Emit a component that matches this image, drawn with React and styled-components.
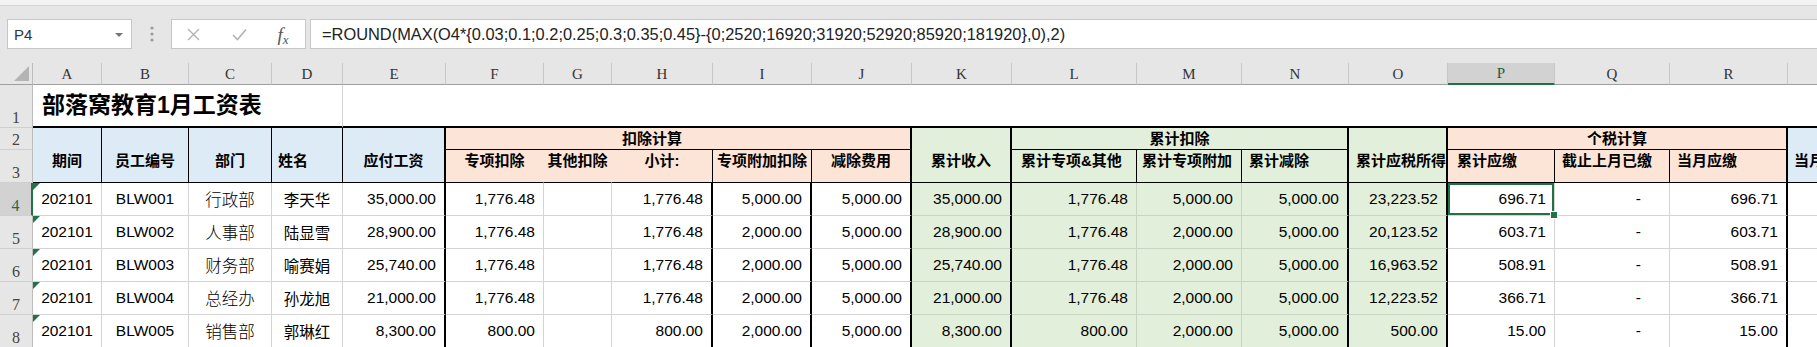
import React from 'react';
import styled, { createGlobalStyle } from 'styled-components';

const GlobalStyle = createGlobalStyle`
  html, body {
    margin: 0;
    padding: 0;
    background: #fff;
  }
  body {
    font-family: "Liberation Sans", "Noto Sans CJK SC", sans-serif;
    overflow: hidden;
  }
`;

// column widths: row header, A..S
const COLS = [33, 69, 87, 83, 71, 103, 98, 68, 101, 99, 100, 100, 125, 105, 107, 99, 107, 115, 118, 100];
// column header, rows 1..8
const ROWS = [22, 43, 22, 33, 33, 33, 33, 33, 33];
const LETTERS = 'ABCDEFGHIJKLMNOPQRS'.split('');

const BLUE = '#ddebf7';
const PEACH = '#fce4d6';
const GREEN = '#e2efda';
const XL_GREEN = '#217346';

const GRID = '1px solid #d4d4d4';
const GRID_G = '1px solid #c8d4c1';
const THIN = '1px solid #000';
const THICK = '2px solid #000';

const FORMULA = '=ROUND(MAX(O4*{0.03;0.1;0.2;0.25;0.3;0.35;0.45}-{0;2520;16920;31920;52920;85920;181920},0),2)';

const people = [
  { id: 'BLW001', dept: '行政部', name: '李天华', pay: '35,000.00', spec: '1,776.48', add: '5,000.00', taxable: '23,223.52', due: '696.71' },
  { id: 'BLW002', dept: '人事部', name: '陆显雪', pay: '28,900.00', spec: '1,776.48', add: '2,000.00', taxable: '20,123.52', due: '603.71' },
  { id: 'BLW003', dept: '财务部', name: '喻赛娟', pay: '25,740.00', spec: '1,776.48', add: '2,000.00', taxable: '16,963.52', due: '508.91' },
  { id: 'BLW004', dept: '总经办', name: '孙龙旭', pay: '21,000.00', spec: '1,776.48', add: '2,000.00', taxable: '12,223.52', due: '366.71' },
  { id: 'BLW005', dept: '销售部', name: '郭琳红', pay: '8,300.00', spec: '800.00', add: '2,000.00', taxable: '500.00', due: '15.00' },
];

// how each data column looks, A..S
const dataCols = [
  { get: () => '202101', align: 'center', flag: true },
  { get: p => p.id, align: 'center' },
  { get: p => p.dept, align: 'center', light: true },
  { get: p => p.name, align: 'center' },
  { get: p => p.pay, r: THICK },
  { get: p => p.spec },
  { get: () => '' },
  { get: p => p.spec, r: THICK },
  { get: p => p.add, r: THICK },
  { get: () => '5,000.00', r: THICK },
  { get: p => p.pay, bg: GREEN, r: THICK, b: GRID_G },
  { get: p => p.spec, bg: GREEN, r: GRID_G, b: GRID_G },
  { get: p => p.add, bg: GREEN, r: GRID_G, b: GRID_G },
  { get: () => '5,000.00', bg: GREEN, r: THICK, b: GRID_G },
  { get: p => p.taxable, bg: GREEN, r: THICK, b: GRID_G },
  { get: p => p.due, sel: true },
  { get: () => '-', pad: 28 },
  { get: p => p.due, r: THICK },
  { get: () => '' },
];

// header cells of sheet rows 2-3 (grid rows 3-4); col/row are grid lines
const headers = [
  { text: '期间', col: '2', row: '3 / 5', bg: BLUE, align: 'center', r: THIN },
  { text: '员工编号', col: '3', row: '3 / 5', bg: BLUE, align: 'center', r: THIN },
  { text: '部门', col: '4', row: '3 / 5', bg: BLUE, align: 'center', r: THIN },
  { text: '姓名', col: '5', row: '3 / 5', bg: BLUE, align: 'left', pad: 6, r: THIN },
  { text: '应付工资', col: '6', row: '3 / 5', bg: BLUE, align: 'center', r: THICK },

  { text: '扣除计算', col: '7 / 12', row: '3', top: true, bg: PEACH, align: 'left', pad: 176, r: THICK },
  { text: '专项扣除', col: '7', row: '4', bg: PEACH, align: 'center', pad: 0, r: `1px solid ${PEACH}` },
  { text: '其他扣除', col: '8', row: '4', bg: PEACH, align: 'center', pad: 0, r: `1px solid ${PEACH}` },
  { text: '小计:', col: '9', row: '4', bg: PEACH, align: 'center', pad: 0, r: THIN },
  { text: '专项附加扣除', col: '10', row: '4', bg: PEACH, align: 'center', pad: 0, r: THIN },
  { text: '减除费用', col: '11', row: '4', bg: PEACH, align: 'center', pad: 0, r: THICK },

  { text: '累计收入', col: '12', row: '3 / 5', bg: GREEN, align: 'center', r: THICK },

  { text: '累计扣除', col: '13 / 16', row: '3', top: true, bg: GREEN, align: 'center', r: THICK },
  { text: '累计专项&其他', col: '13', row: '4', bg: GREEN, align: 'left', pad: 9, r: THIN },
  { text: '累计专项附加', col: '14', row: '4', bg: GREEN, align: 'left', pad: 5, r: THIN },
  { text: '累计减除', col: '15', row: '4', bg: GREEN, align: 'left', pad: 7, r: THICK },

  { text: '累计应税所得', col: '16', row: '3 / 5', bg: GREEN, align: 'left', pad: 7, r: THICK },

  { text: '个税计算', col: '17 / 20', row: '3', top: true, bg: PEACH, align: 'center', r: THICK },
  { text: '累计应缴', col: '17', row: '4', bg: PEACH, align: 'left', pad: 9, r: THIN },
  { text: '截止上月已缴', col: '18', row: '4', bg: PEACH, align: 'left', pad: 7, r: THIN },
  { text: '当月应缴', col: '19', row: '4', bg: PEACH, align: 'left', pad: 7, r: THICK },

  { text: '当月实发', col: '20', row: '3 / 5', bg: BLUE, align: 'left', pad: 6, r: GRID },
];

const justify = { left: 'flex-start', center: 'center', right: 'flex-end' };

/* ---------- formula bar ---------- */

const TopStrip = styled.div`
  height: 5px;
  background: #f3f3f3;
  border-bottom: 1px solid #d6d6d6;
`;

const Toolbar = styled.div`
  height: 57px;
  box-sizing: border-box;
  background: #e6e6e6;
  display: flex;
  align-items: flex-start;
  padding: 13px 0 0 7px;
`;

const NameBox = styled.div`
  position: relative;
  width: 125px;
  height: 30px;
  box-sizing: border-box;
  background: #fff;
  border: 1px solid #c6c6c6;
  display: flex;
  align-items: center;
  padding-left: 6px;
  font-size: 15px;
  color: #333;
`;

const Caret = styled.span`
  position: absolute;
  right: 8px;
  top: 13px;
  border-left: 4px solid transparent;
  border-right: 4px solid transparent;
  border-top: 4px solid #777;
`;

const Grip = styled.div`
  width: 39px;
  height: 30px;
  display: flex;
  align-items: center;
  justify-content: center;
`;

const ButtonBox = styled.div`
  width: 135px;
  height: 30px;
  box-sizing: border-box;
  background: #fff;
  border: 1px solid #c6c6c6;
  display: grid;
  grid-template-columns: 42px 50px 38px;
  align-items: center;
  justify-items: center;
`;

const Fx = styled.span`
  font-family: "Liberation Serif", serif;
  font-style: italic;
  font-size: 19px;
  color: #555;
  line-height: 1;
  & small {
    font-size: 13px;
    position: relative;
    top: 3px;
  }
`;

const FormulaBox = styled.div`
  flex: 1;
  margin-left: 4px;
  height: 30px;
  box-sizing: border-box;
  background: #fff;
  border: 1px solid #c6c6c6;
  border-right: none;
  display: flex;
  align-items: center;
  padding-left: 11px;
  font-size: 16.4px;
  color: #222;
  white-space: nowrap;
  overflow: hidden;
`;

/* ---------- sheet ---------- */

const Sheet = styled.div`
  display: grid;
  grid-template-columns: ${COLS.map(c => c + 'px').join(' ')};
  grid-template-rows: ${ROWS.map(r => r + 'px').join(' ')};
  width: max-content;
`;

const Corner = styled.div`
  grid-column: 1;
  grid-row: 1;
  position: relative;
  background: #e6e6e6;
  border-right: 1px solid #bdbdbd;
  border-bottom: 1px solid #9f9f9f;
  &::after {
    content: '';
    position: absolute;
    right: 3px;
    bottom: 3px;
    border-left: 15px solid transparent;
    border-bottom: 15px solid #b4b4b4;
  }
`;

const ColHead = styled.div`
  grid-row: 1;
  grid-column: ${p => p.$col};
  display: flex;
  align-items: center;
  justify-content: center;
  background: ${p => (p.$active ? '#d2d2d2' : '#e6e6e6')};
  border-right: 1px solid #c8c8c8;
  border-bottom: ${p => (p.$active ? `2px solid ${XL_GREEN}` : '1px solid #9f9f9f')};
  font-family: "Liberation Serif", serif;
  font-size: 15px;
  color: ${p => (p.$active ? '#1f5c3a' : '#333')};
  padding-top: 1px;
`;

const RowHead = styled.div`
  grid-column: 1;
  grid-row: ${p => p.$row};
  display: flex;
  align-items: flex-end;
  justify-content: center;
  background: ${p => (p.$active ? '#d2d2d2' : '#e6e6e6')};
  border-right: ${p => (p.$active ? `2px solid ${XL_GREEN}` : '1px solid #bdbdbd')};
  border-bottom: 1px solid #cfcfcf;
  font-family: "Liberation Serif", serif;
  font-size: 16px;
  line-height: 18px;
  color: ${p => (p.$active ? '#2b6a45' : '#444')};
`;

const Cell = styled.div`
  grid-column: ${p => p.$col};
  grid-row: ${p => p.$row};
  position: relative;
  display: flex;
  align-items: center;
  justify-content: ${p => justify[p.$align || 'right']};
  padding: 0 ${p => p.$pad ?? 8}px;
  background: ${p => p.$bg || '#fff'};
  border-right: ${p => p.$r || GRID};
  border-bottom: ${p => p.$b || GRID};
  box-shadow: ${p => (p.$sel ? `inset 0 0 0 2px ${XL_GREEN}` : 'none')};
  white-space: nowrap;
  overflow: ${p => (p.$sel ? 'visible' : 'hidden')};
  font-size: ${p => (p.$light ? 16.5 : 15.5)}px;
  font-weight: ${p => (p.$light ? 300 : 400)};
  color: #000;
`;

const Flag = styled.span`
  position: absolute;
  top: 0;
  left: 0;
  border-top: 7px solid ${XL_GREEN};
  border-right: 7px solid transparent;
`;

const Handle = styled.span`
  position: absolute;
  right: -4px;
  bottom: -4px;
  width: 6px;
  height: 6px;
  background: ${XL_GREEN};
  border: 1px solid #fff;
  z-index: 2;
`;

const TitleCell = styled(Cell)`
  align-items: flex-end;
  padding: 0 0 7px 9px;
  font-size: 23px;
  font-weight: 700;
  line-height: 28px;
`;

const HeadCell = styled(Cell)`
  align-items: ${p => (p.$top ? 'center' : 'flex-end')};
  padding-bottom: ${p => (p.$top ? 0 : 11)}px;
  font-size: 15px;
  font-weight: 700;
  line-height: 20px;
  border-bottom: ${THIN};
`;

function Cross() {
  return (
    <svg width="15" height="15" viewBox="0 0 15 15">
      <path d="M2 2 L13 13 M13 2 L2 13" stroke="#b3b3b3" strokeWidth="1.4" fill="none" />
    </svg>
  );
}

function Check() {
  return (
    <svg width="17" height="15" viewBox="0 0 17 15">
      <path d="M2 8 L6.5 12.5 L15 2.5" stroke="#b3b3b3" strokeWidth="1.6" fill="none" />
    </svg>
  );
}

function Dots() {
  return (
    <svg width="4" height="16" viewBox="0 0 4 16">
      <circle cx="2" cy="2" r="1.6" fill="#9c9c9c" />
      <circle cx="2" cy="8" r="1.6" fill="#9c9c9c" />
      <circle cx="2" cy="14" r="1.6" fill="#9c9c9c" />
    </svg>
  );
}

export default function App() {
  return (
    <>
      <GlobalStyle />
      <TopStrip />
      <Toolbar>
        <NameBox>
          P4
          <Caret />
        </NameBox>
        <Grip>
          <Dots />
        </Grip>
        <ButtonBox>
          <Cross />
          <Check />
          <Fx>
            f<small>x</small>
          </Fx>
        </ButtonBox>
        <FormulaBox>{FORMULA}</FormulaBox>
      </Toolbar>

      <Sheet>
        <Corner />
        {LETTERS.map((l, i) => (
          <ColHead key={l} $col={i + 2} $active={l === 'P'}>
            {l}
          </ColHead>
        ))}
        {[1, 2, 3, 4, 5, 6, 7, 8].map(n => (
          <RowHead key={n} $row={n + 1} $active={n === 4}>
            {n}
          </RowHead>
        ))}

        {/* row 1: title */}
        <TitleCell $col="2 / 6" $row="2" $align="left" $b={THICK}>
          部落窝教育1月工资表
        </TitleCell>
        <Cell $col="6 / 21" $row="2" $r="none" $b={THICK} />

        {headers.map(h => (
          <HeadCell
            key={h.text}
            $col={h.col}
            $row={h.row}
            $top={h.top}
            $bg={h.bg}
            $align={h.align}
            $pad={h.pad}
            $r={h.r}
          >
            {h.text}
          </HeadCell>
        ))}

        {people.map((p, ri) =>
          dataCols.map((c, ci) => {
            const sel = c.sel && ri === 0;
            return (
              <Cell
                key={`${ri}-${ci}`}
                $col={ci + 2}
                $row={ri + 5}
                $align={c.align}
                $bg={c.bg}
                $r={c.r}
                $b={c.b}
                $pad={c.pad}
                $light={c.light}
                $sel={sel}
              >
                {c.flag && <Flag />}
                {c.get(p)}
                {sel && <Handle />}
              </Cell>
            );
          })
        )}
      </Sheet>
    </>
  );
}
